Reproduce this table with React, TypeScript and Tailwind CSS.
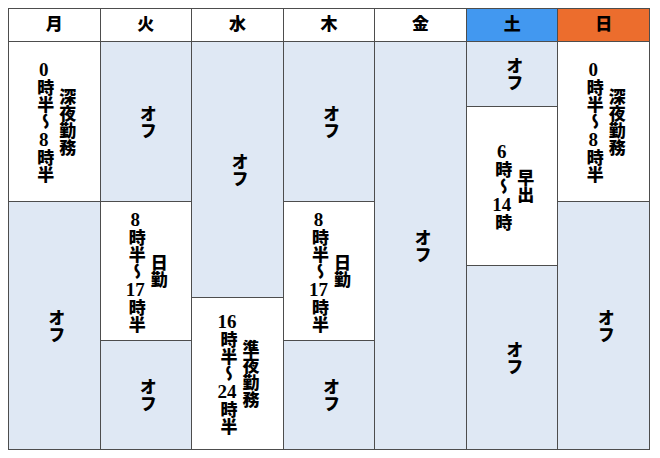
import React from 'react';

type Cell = {
  h: string;
  shift?: string;
  time?: string;
};

type Day = {
  label: string;
  head: string;
  cells: Cell[];
};

const days: Day[] = [
  {
    label: '月',
    head: 'bg-white',
    cells: [
      { h: 'h-[160px]', shift: '深夜勤務', time: '0時半〜8時半' },
      { h: 'flex-1' },
    ],
  },
  {
    label: '火',
    head: 'bg-white',
    cells: [
      { h: 'h-[160px]' },
      { h: 'h-[139px]', shift: '日勤', time: '8時半〜17時半' },
      { h: 'flex-1' },
    ],
  },
  {
    label: '水',
    head: 'bg-white',
    cells: [
      { h: 'h-[256px]' },
      { h: 'flex-1', shift: '準夜勤務', time: '16時半〜24時半' },
    ],
  },
  {
    label: '木',
    head: 'bg-white',
    cells: [
      { h: 'h-[160px]' },
      { h: 'h-[139px]', shift: '日勤', time: '8時半〜17時半' },
      { h: 'flex-1' },
    ],
  },
  {
    label: '金',
    head: 'bg-white',
    cells: [{ h: 'flex-1' }],
  },
  {
    label: '土',
    head: 'bg-[#4298f0]',
    cells: [
      { h: 'h-[65px]' },
      { h: 'h-[159px]', shift: '早出', time: '6時〜14時' },
      { h: 'flex-1' },
    ],
  },
  {
    label: '日',
    head: 'bg-[#ec6d2d]',
    cells: [
      { h: 'h-[160px]', shift: '深夜勤務', time: '0時半〜8時半' },
      { h: 'flex-1' },
    ],
  },
];

// digits stand upright inside vertical text
function TimeText({ text }: { text: string }) {
  const parts = text.split(/(\d+)/).filter((p) => p !== '');
  return (
    <>
      {parts.map((p, i) =>
        /^\d+$/.test(p) ? (
          <span key={i} className="[text-combine-upright:all] text-[19px]">
            {p}
          </span>
        ) : (
          <span key={i}>{p}</span>
        )
      )}
    </>
  );
}

function ShiftCell({ cell }: { cell: Cell }) {
  const work = !!cell.shift;
  return (
    <div
      className={`${cell.h} shrink-0 border-r border-b border-[#4d4d4d] flex items-center justify-center ${
        work ? 'bg-white' : 'bg-[#dfe8f4]'
      }`}
    >
      <div className="[writing-mode:vertical-rl] text-center text-[17px] leading-[22px] font-black text-black">
        {work ? (
          <>
            <div>{cell.shift}</div>
            <div>
              <TimeText text={cell.time || ''} />
            </div>
          </>
        ) : (
          <div>オフ</div>
        )}
      </div>
    </div>
  );
}

export default function App() {
  return (
    <div
      className="w-[660px] h-[458px] bg-white pl-2 pt-2"
      style={{ fontFamily: '"Liberation Serif", "Noto Sans CJK JP", serif' }}
    >
      <div className="w-[642px] grid grid-cols-7 border-l border-t border-[#4d4d4d]">
        {days.map((d) => (
          <div key={d.label} className="flex flex-col h-[441px]">
            <div
              className={`h-[33px] shrink-0 border-r border-b border-[#4d4d4d] flex items-center justify-center text-[17px] font-black text-black ${d.head}`}
            >
              {d.label}
            </div>
            {d.cells.map((c, i) => (
              <ShiftCell key={i} cell={c} />
            ))}
          </div>
        ))}
      </div>
    </div>
  );
}
